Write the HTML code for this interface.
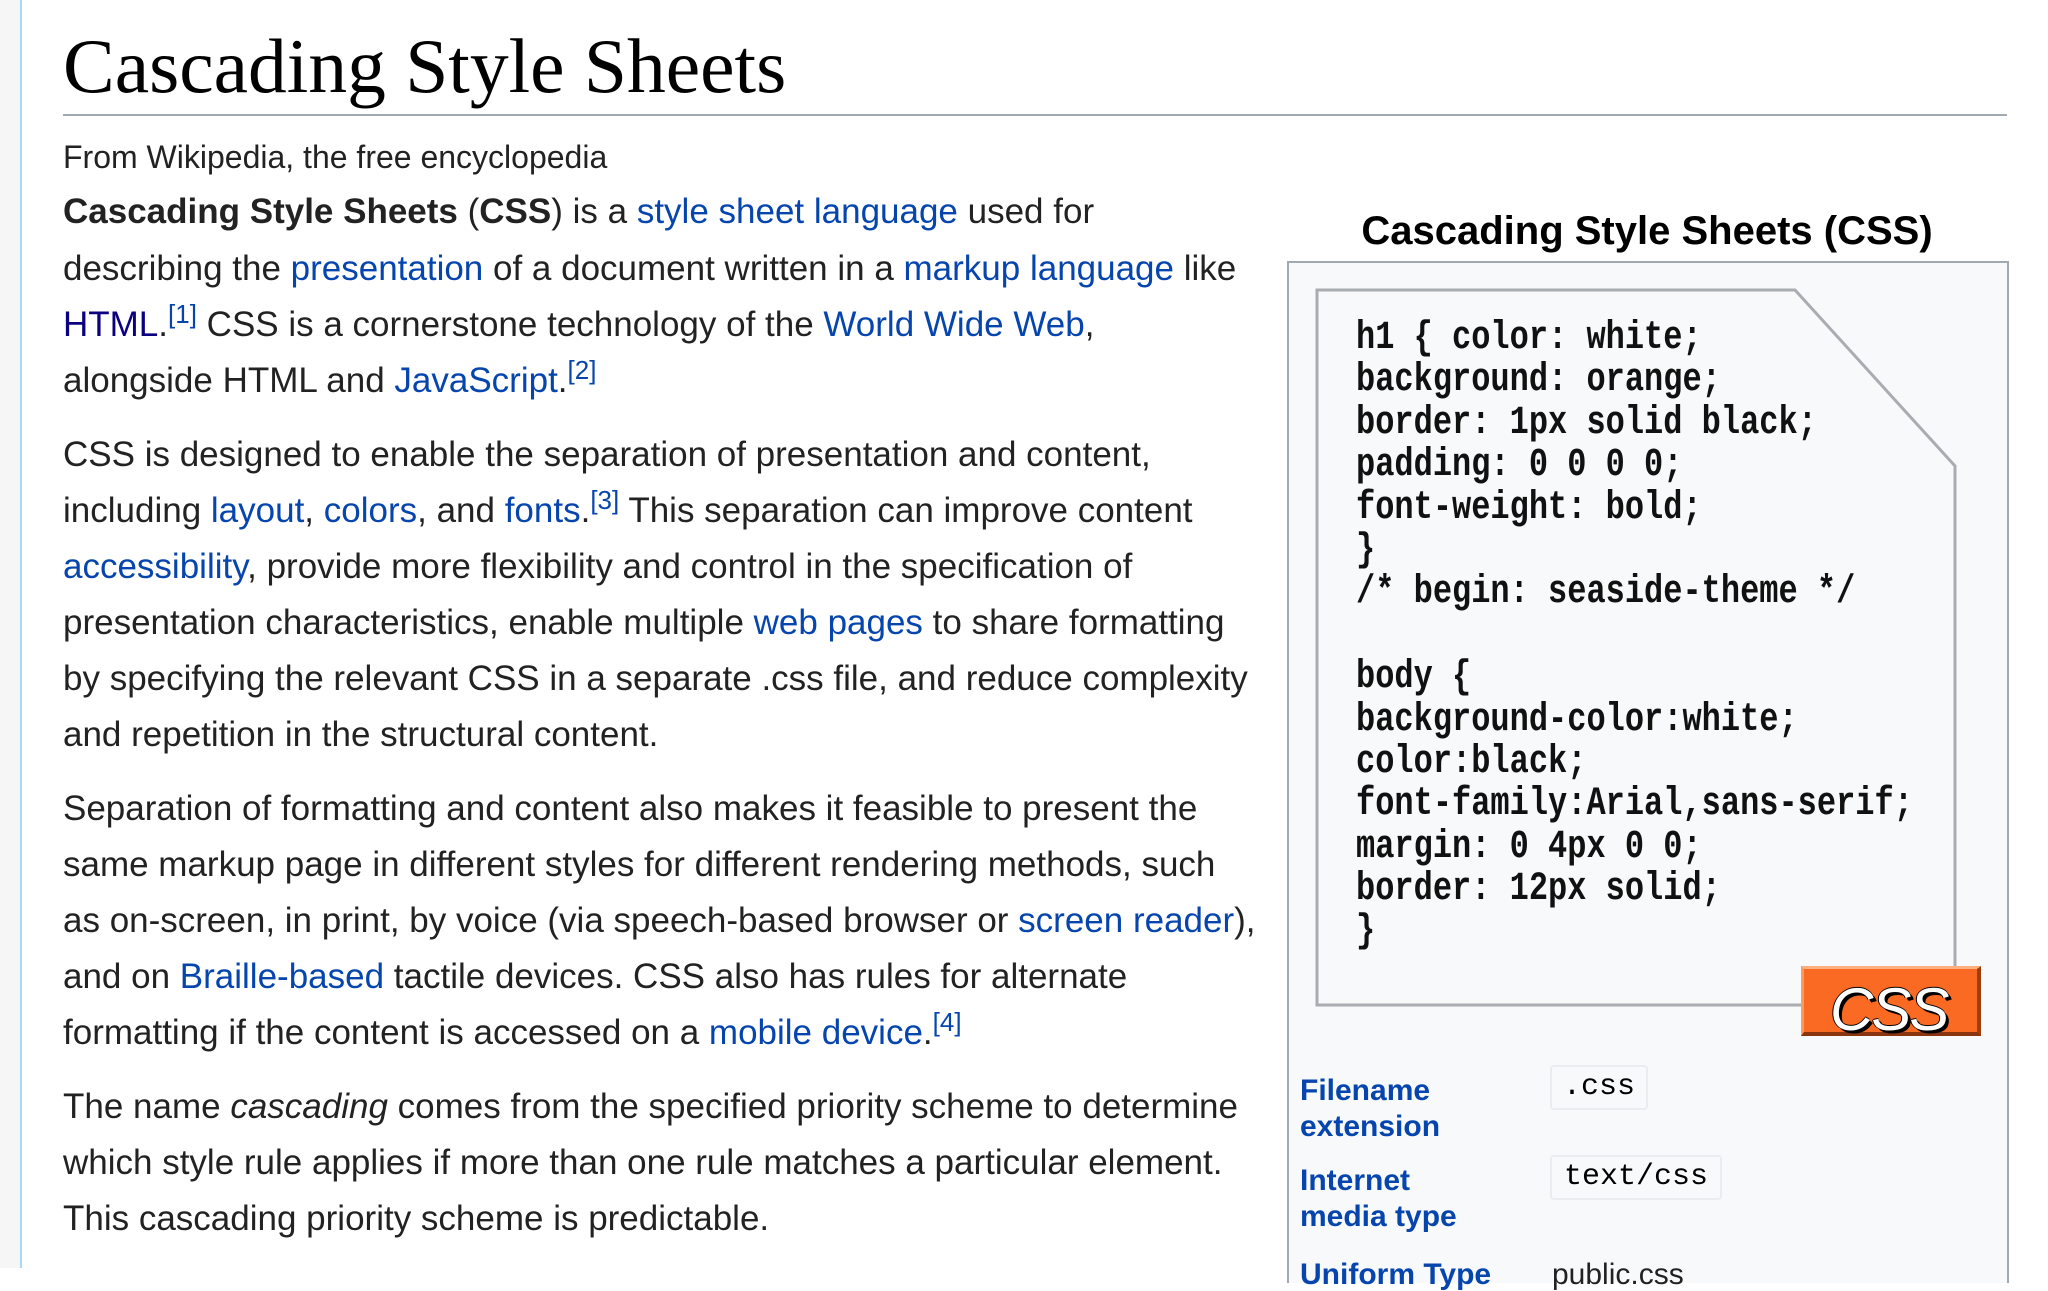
<!DOCTYPE html>
<html><head><meta charset="utf-8"><style>
html,body{margin:0;padding:0}
body{width:2048px;height:1268px;position:relative;overflow:hidden;background:#fff;font-family:"Liberation Sans",Arial,sans-serif;color:#222}
.l{position:absolute;white-space:nowrap;line-height:1}
.t{font-size:35px;left:63px}
a{color:#0645ad;text-decoration:none}
a.v{color:#0b0080}
sup{font-size:26px;vertical-align:0;position:relative;top:-13px;line-height:0}
.code{position:absolute;left:1356px;font-family:"Liberation Mono",monospace;font-weight:bold;font-size:40px;line-height:1;white-space:nowrap;transform:scaleX(0.8);transform-origin:0 0;color:#111}
.lab{position:absolute;left:1300px;font-size:30px;font-weight:bold;color:#0645ad;line-height:1;white-space:nowrap}
.box{position:absolute;background:#f8f9fa;border:2px solid #eaecf0;border-radius:4px;font-family:"Liberation Mono",monospace;font-size:30px;color:#000;box-sizing:border-box;text-align:center}
</style></head><body>
<div style="position:absolute;left:0;top:0;width:20px;height:1268px;background:#f6f6f6"></div>
<div style="position:absolute;left:20px;top:0;width:2px;height:1268px;background:#a7d7f9"></div>

<div class="l" style="left:63px;top:28px;font-family:'Liberation Serif',serif;font-size:77.5px;color:#000">Cascading Style Sheets</div>
<div style="position:absolute;left:63px;top:114px;width:1944px;height:2px;background:#a2a9b1"></div>
<div class="l" style="left:63px;top:141px;font-size:32px">From Wikipedia, the free encyclopedia</div>

<div class="l t" style="top:194px"><b>Cascading Style Sheets</b> (<b>CSS</b>) is a <a href="#">style sheet language</a> used for</div>
<div class="l t" style="top:251px">describing the <a href="#">presentation</a> of a document written in a <a href="#">markup language</a> like</div>
<div class="l t" style="top:307px"><a class="v" href="#">HTML</a>.<sup><a href="#">[1]</a></sup> CSS is a cornerstone technology of the <a href="#">World Wide Web</a>,</div>
<div class="l t" style="top:363px">alongside HTML and <a href="#">JavaScript</a>.<sup><a href="#">[2]</a></sup></div>

<div class="l t" style="top:437px">CSS is designed to enable the separation of presentation and content,</div>
<div class="l t" style="top:493px">including <a href="#">layout</a>, <a href="#">colors</a>, and <a href="#">fonts</a>.<sup><a href="#">[3]</a></sup> This separation can improve content</div>
<div class="l t" style="top:549px"><a href="#">accessibility</a>, provide more flexibility and control in the specification of</div>
<div class="l t" style="top:605px">presentation characteristics, enable multiple <a href="#">web pages</a> to share formatting</div>
<div class="l t" style="top:661px">by specifying the relevant CSS in a separate .css file, and reduce complexity</div>
<div class="l t" style="top:717px">and repetition in the structural content.</div>

<div class="l t" style="top:791px">Separation of formatting and content also makes it feasible to present the</div>
<div class="l t" style="top:847px">same markup page in different styles for different rendering methods, such</div>
<div class="l t" style="top:903px">as on-screen, in print, by voice (via speech-based browser or <a href="#">screen reader</a>),</div>
<div class="l t" style="top:959px">and on <a href="#">Braille-based</a> tactile devices. CSS also has rules for alternate</div>
<div class="l t" style="top:1015px">formatting if the content is accessed on a <a href="#">mobile device</a>.<sup><a href="#">[4]</a></sup></div>

<div class="l t" style="top:1089px">The name <i>cascading</i> comes from the specified priority scheme to determine</div>
<div class="l t" style="top:1145px">which style rule applies if more than one rule matches a particular element.</div>
<div class="l t" style="top:1201px">This cascading priority scheme is predictable.</div>

<!-- infobox -->
<div class="l" style="left:1287px;width:720px;text-align:center;top:211px;font-size:40px;font-weight:bold;color:#000">Cascading Style Sheets (CSS)</div>
<div style="position:absolute;left:1287px;top:261px;width:718px;height:1020px;background:#f8f9fa;border:2px solid #a2a9b1;border-bottom:none"></div>
<svg style="position:absolute;left:0;top:0" width="2048" height="1268">
<polygon points="1317,290 1795,290 1955,466 1955,1005 1317,1005" fill="#f8f9fa" stroke="#a9adb1" stroke-width="3"/>
</svg>
<div class="code" style="top:319px">h1 { color: white;</div>
<div class="code" style="top:361px">background: orange;</div>
<div class="code" style="top:404px">border: 1px solid black;</div>
<div class="code" style="top:446px">padding: 0 0 0 0;</div>
<div class="code" style="top:489px">font-weight: bold;</div>
<div class="code" style="top:531px">}</div>
<div class="code" style="top:573px">/* begin: seaside-theme */</div>
<div class="code" style="top:658px">body {</div>
<div class="code" style="top:701px">background-color:white;</div>
<div class="code" style="top:743px">color:black;</div>
<div class="code" style="top:785px">font-family:Arial,sans-serif;</div>
<div class="code" style="top:828px">margin: 0 4px 0 0;</div>
<div class="code" style="top:870px">border: 12px solid;</div>
<div class="code" style="top:912px">}</div>

<div style="position:absolute;left:1801px;top:966px;width:180px;height:70px;background:#fb6a22;box-sizing:border-box;border-top:3px solid #fdb07f;border-left:3px solid #fd9a5c;border-right:4px solid #9c3f10;border-bottom:4px solid #8a3510"></div>
<div class="l" style="left:1830px;top:980px;font-size:60px;color:#fff;letter-spacing:-2px;font-style:italic;text-shadow:3px 3px 0 #000,2px 2px 0 #000,-1px 0 0 #000,0 -1px 0 #000">CSS</div>

<div class="lab" style="top:1076px">Filename</div>
<div class="lab" style="top:1112px">extension</div>
<div class="lab" style="top:1166px">Internet</div>
<div class="lab" style="top:1202px">media type</div>
<div class="lab" style="top:1260px">Uniform Type</div>
<div class="box" style="left:1550px;top:1065px;width:98px;height:45px;line-height:41px">.css</div>
<div class="box" style="left:1550px;top:1155px;width:172px;height:45px;line-height:41px">text/css</div>
<div class="l" style="left:1552px;top:1260px;font-size:30px;color:#222">public.css</div>
</body></html>
